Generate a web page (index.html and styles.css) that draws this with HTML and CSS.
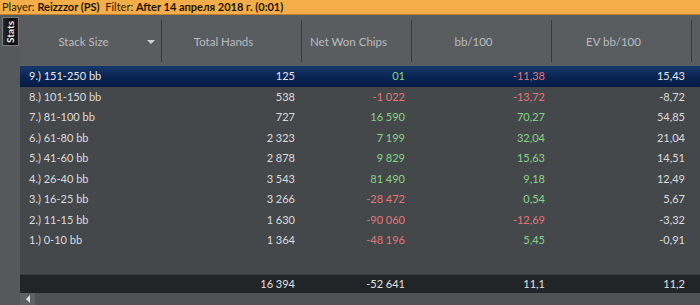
FILE: index.html
```html
<!DOCTYPE html>
<html>
<head>
  <meta charset="UTF-8">
  <title>Stack Size Stats</title>
  <link rel="stylesheet" href="styles.css">
</head>
<body>
  <div class="topbar">
    Player: <b>Reizzzor (PS)</b>&nbsp;&nbsp;Filter: <b>After 14 апреля 2018 г. (0:01)</b>
  </div>

  <div class="main">
    <div class="side">
      <div class="tab"><span>Stats</span></div>
    </div>

    <div class="grid">
      <div class="head">
        <div class="hcell first">Stack Size <span class="arrow"></span></div>
        <div class="hcell">Total Hands</div>
        <div class="hcell">Net Won Chips</div>
        <div class="hcell">bb/100</div>
        <div class="hcell">EV bb/100</div>
        <div class="hcell last"></div>
      </div>

      <div class="rows">
        <div class="row selected">
          <div class="cell name">9.) 151-250 bb</div>
          <div class="cell">125</div>
          <div class="cell pos">01</div>
          <div class="cell neg">-11,38</div>
          <div class="cell">15,43</div>
          <div class="cell"></div>
        </div>
        <div class="row">
          <div class="cell name">8.) 101-150 bb</div>
          <div class="cell">538</div>
          <div class="cell neg">-1 022</div>
          <div class="cell neg">-13,72</div>
          <div class="cell">-8,72</div>
          <div class="cell"></div>
        </div>
        <div class="row">
          <div class="cell name">7.) 81-100 bb</div>
          <div class="cell">727</div>
          <div class="cell pos">16 590</div>
          <div class="cell pos">70,27</div>
          <div class="cell">54,85</div>
          <div class="cell"></div>
        </div>
        <div class="row">
          <div class="cell name">6.) 61-80 bb</div>
          <div class="cell">2 323</div>
          <div class="cell pos">7 199</div>
          <div class="cell pos">32,04</div>
          <div class="cell">21,04</div>
          <div class="cell"></div>
        </div>
        <div class="row">
          <div class="cell name">5.) 41-60 bb</div>
          <div class="cell">2 878</div>
          <div class="cell pos">9 829</div>
          <div class="cell pos">15,63</div>
          <div class="cell">14,51</div>
          <div class="cell"></div>
        </div>
        <div class="row">
          <div class="cell name">4.) 26-40 bb</div>
          <div class="cell">3 543</div>
          <div class="cell pos">81 490</div>
          <div class="cell pos">9,18</div>
          <div class="cell">12,49</div>
          <div class="cell"></div>
        </div>
        <div class="row">
          <div class="cell name">3.) 16-25 bb</div>
          <div class="cell">3 266</div>
          <div class="cell neg">-28 472</div>
          <div class="cell pos">0,54</div>
          <div class="cell">5,67</div>
          <div class="cell"></div>
        </div>
        <div class="row">
          <div class="cell name">2.) 11-15 bb</div>
          <div class="cell">1 630</div>
          <div class="cell neg">-90 060</div>
          <div class="cell neg">-12,69</div>
          <div class="cell">-3,32</div>
          <div class="cell"></div>
        </div>
        <div class="row">
          <div class="cell name">1.) 0-10 bb</div>
          <div class="cell">1 364</div>
          <div class="cell neg">-48 196</div>
          <div class="cell pos">5,45</div>
          <div class="cell">-0,91</div>
          <div class="cell"></div>
        </div>
      </div>

      <div class="row total">
        <div class="cell name"></div>
        <div class="cell">16 394</div>
        <div class="cell">-52 641</div>
        <div class="cell">11,1</div>
        <div class="cell">11,2</div>
        <div class="cell"></div>
      </div>

      <div class="hscroll">
        <div class="sbtn"><span class="larrow"></span></div>
      </div>
    </div>
  </div>
</body>
</html>
```

FILE: styles.css
```css
body {
  margin: 0;
  width: 700px;
  height: 305px;
  overflow: hidden;
  font-family: Lato, "Open Sans", sans-serif;
  background: #56595c;
  color: #dcdcdc;
}

.topbar {
  height: 14px;
  line-height: 14px;
  padding-left: 2px;
  font-size: 11px;
  color: #2a2000;
  background: #f4ad48;
  border-bottom: 1px solid #b9812f;
  white-space: nowrap;
}

.topbar b {
  color: #1a1200;
}

.main {
  display: flex;
  height: 290px;
}

.side {
  width: 20px;
  flex-shrink: 0;
  background: #56595c;
  padding-top: 2px;
  box-sizing: border-box;
}

.tab {
  margin-left: 2px;
  width: 17px;
  height: 29px;
  background: linear-gradient(to right, #2a2a2a, #050505 60%, #1c1c1c);
  border: 1px solid #7a7d80;
  box-sizing: border-box;
  display: flex;
  align-items: center;
  justify-content: center;
}

.tab span {
  transform: rotate(-90deg);
  font-size: 10px;
  font-weight: bold;
  color: #f0f0f0;
}

.grid {
  flex: 1;
  min-width: 0;
  display: flex;
  flex-direction: column;
  background: #45484b;
}

.head,
.row {
  display: grid;
  grid-template-columns: 142px 140px 110px 140px 140px 1fr;
}

.head {
  height: 51px;
  background: #5a5d60;
}

.hcell {
  display: flex;
  align-items: center;
  justify-content: center;
  font-size: 11.5px;
  color: #b9bcbf;
  border-right: 1px solid #38393b;
  margin: 5px 0 4px;
  padding-right: 16px;
}

.hcell.first {
  position: relative;
  padding-right: 14px;
}

.hcell.last {
  border-right: none;
}

.arrow {
  position: absolute;
  right: 6px;
  top: 20px;
  border-left: 4px solid transparent;
  border-right: 4px solid transparent;
  border-top: 4px solid #d0d3d6;
}

.rows {
  flex: 1;
}

.row {
  height: 20.5px;
  font-size: 11px;
}

.cell {
  text-align: right;
  padding-right: 7px;
  line-height: 20.5px;
  white-space: nowrap;
}

.cell.name {
  text-align: left;
  padding-left: 9px;
}

.row.selected {
  background: linear-gradient(to bottom, #16386c, #0a2553 50%, #071c45);
  color: #e6e8ec;
}

.pos {
  color: #85d685;
}

.neg {
  color: #e27676;
}

.row.total {
  height: 18px;
  background: #222528;
  color: #e2e2e2;
  border-top: 1px solid #3a3d40;
}

.row.total .cell {
  line-height: 18px;
}

.hscroll {
  height: 12px;
  background: #505356;
  display: flex;
}

.sbtn {
  width: 15px;
  background: #5f6265;
  display: flex;
  align-items: center;
  justify-content: center;
}

.larrow {
  border-top: 4px solid transparent;
  border-bottom: 4px solid transparent;
  border-right: 4px solid #e0e0e0;
}
```
